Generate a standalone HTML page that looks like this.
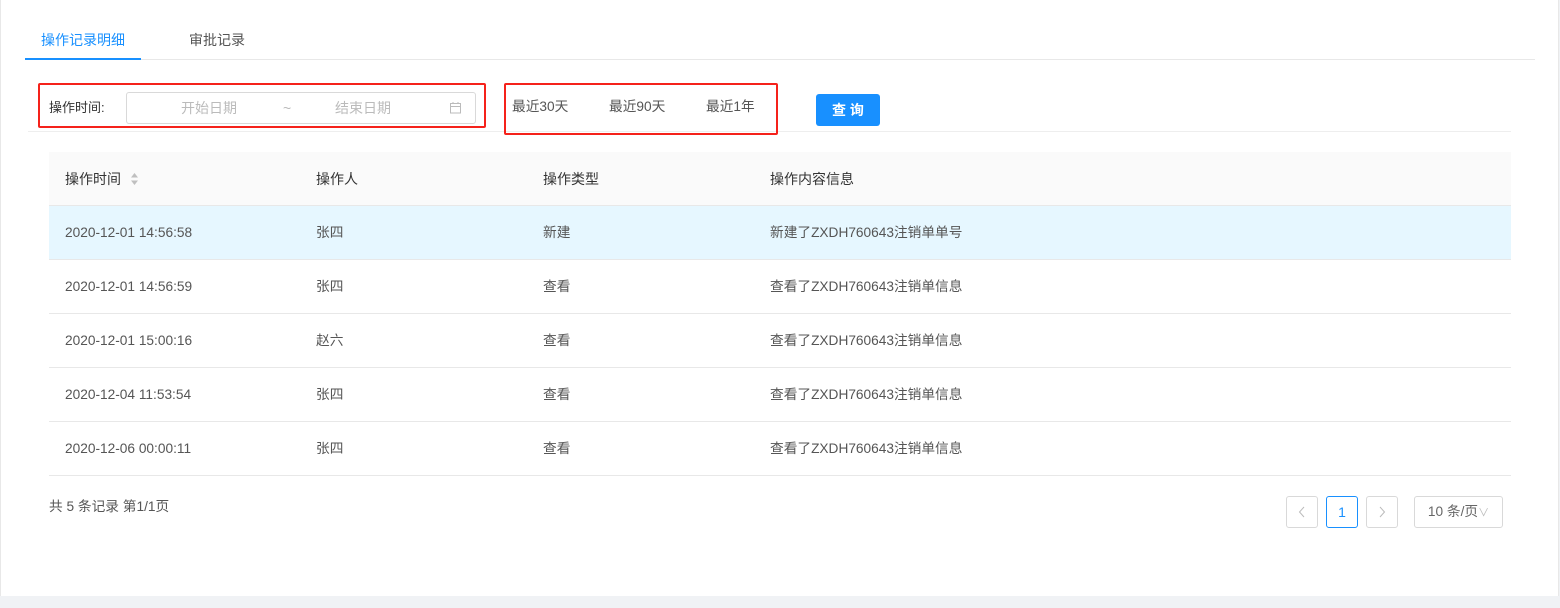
<!DOCTYPE html>
<html><head><meta charset="utf-8"><style>
*{margin:0;padding:0;box-sizing:border-box}
body{width:1560px;height:608px;background:#f0f2f5;font-family:"Liberation Sans","Noto Sans CJK SC",sans-serif;font-size:14px;color:#333;position:relative;overflow:hidden}
.panel{position:absolute;left:0;top:0;width:1559px;height:596px;background:#fff;border-left:1px solid #e8e8e8;border-right:1px solid #e8e8e8}
.a{position:absolute;white-space:nowrap;line-height:20px}
.red{position:absolute;border:2px solid #f5221b;border-radius:2px}
.row{position:absolute;left:49px;width:1462px;height:54px;border-bottom:1px solid #e8e8e8;color:#555;font-size:13.7px}
.row span{position:absolute;top:0;line-height:54px;white-space:nowrap}
.pg{position:absolute;top:496px;height:32px;border:1px solid #d9d9d9;border-radius:3px;text-align:center;line-height:30px;color:#bbb}
</style></head><body>
<div class="panel"></div>
<div class="a" style="left:41px;top:30px;color:#1890ff">操作记录明细</div>
<div class="a" style="left:189px;top:30px;color:#555">审批记录</div>
<div class="a" style="left:25px;top:59px;width:1510px;height:1px;background:#e8e8e8"></div>
<div class="a" style="left:25px;top:58px;width:116px;height:2px;background:#1890ff"></div>

<div class="a" style="left:49px;top:98px;color:#333;font-size:13px">操作时间:</div>
<div class="a" style="left:126px;top:92px;width:350px;height:32px;border:1px solid #d9d9d9;border-radius:3px"></div>
<div class="a" style="left:181px;top:98px;color:#bbb">开始日期</div>
<div class="a" style="left:283px;top:98px;color:#bbb">~</div>
<div class="a" style="left:335px;top:98px;color:#bbb">结束日期</div>
<svg class="a" style="left:449px;top:101px" width="13" height="13" viewBox="0 0 13 13" fill="none" stroke="#bbb"><rect x="1.5" y="2.5" width="10" height="9.5"/><line x1="1.5" y1="5.5" x2="11.5" y2="5.5"/><line x1="4" y1="1" x2="4" y2="3"/><line x1="9" y1="1" x2="9" y2="3"/></svg>
<div class="red" style="left:38px;top:83px;width:448px;height:45px"></div>
<div class="a" style="left:28px;top:131px;width:1483px;height:1px;background:#eee"></div>

<div class="a" style="left:512px;top:97px;color:#555;font-size:13.7px">最近30天</div>
<div class="a" style="left:609px;top:97px;color:#555;font-size:13.7px">最近90天</div>
<div class="a" style="left:706px;top:97px;color:#555;font-size:13.7px">最近1年</div>
<div class="red" style="left:504px;top:83px;width:274px;height:52px"></div>
<div class="a" style="left:816px;top:94px;width:64px;height:32px;background:#1890ff;border-radius:3px;color:#fff;text-align:center;line-height:32px;font-size:14px;font-weight:bold">查 询</div>

<div class="a" style="left:49px;top:152px;width:1462px;height:54px;background:#fafafa;border-bottom:1px solid #e8e8e8"></div>
<div class="a" style="left:65px;top:169px">操作时间</div>
<svg class="a" style="left:130px;top:172px" width="9" height="14" viewBox="0 0 9 14" fill="#bfbfbf"><path d="M4.5 1L8 5.5H1z"/><path d="M4.5 13L8 8.5H1z"/></svg>
<div class="a" style="left:316px;top:169px">操作人</div>
<div class="a" style="left:543px;top:169px">操作类型</div>
<div class="a" style="left:770px;top:169px">操作内容信息</div>

<div class="row" style="top:206px;background:#e6f7ff"><span style="left:16px">2020-12-01 14:56:58</span><span style="left:267px">张四</span><span style="left:494px">新建</span><span style="left:721px">新建了ZXDH760643注销单单号</span></div>
<div class="row" style="top:260px"><span style="left:16px">2020-12-01 14:56:59</span><span style="left:267px">张四</span><span style="left:494px">查看</span><span style="left:721px">查看了ZXDH760643注销单信息</span></div>
<div class="row" style="top:314px"><span style="left:16px">2020-12-01 15:00:16</span><span style="left:267px">赵六</span><span style="left:494px">查看</span><span style="left:721px">查看了ZXDH760643注销单信息</span></div>
<div class="row" style="top:368px"><span style="left:16px">2020-12-04 11:53:54</span><span style="left:267px">张四</span><span style="left:494px">查看</span><span style="left:721px">查看了ZXDH760643注销单信息</span></div>
<div class="row" style="top:422px"><span style="left:16px">2020-12-06 00:00:11</span><span style="left:267px">张四</span><span style="left:494px">查看</span><span style="left:721px">查看了ZXDH760643注销单信息</span></div>

<div class="a" style="left:49px;top:497px;color:#555;font-size:13.7px">共 5 条记录 第1/1页</div>
<div class="pg" style="left:1286px;width:32px"><svg width="8" height="12" viewBox="0 0 8 12" style="margin-top:9px" fill="none" stroke="#bbb"><path d="M6 1L1.5 6 6 11"/></svg></div>
<div class="pg" style="left:1326px;width:32px;border-color:#1890ff;color:#1890ff">1</div>
<div class="pg" style="left:1366px;width:32px"><svg width="8" height="12" viewBox="0 0 8 12" style="margin-top:9px" fill="none" stroke="#bbb"><path d="M2 1L6.5 6 2 11"/></svg></div>
<div class="pg" style="left:1414px;width:89px;color:#666;font-size:13.7px">10 条/页<span style="color:#bbb;font-size:11px">∨</span></div>
</body></html>
